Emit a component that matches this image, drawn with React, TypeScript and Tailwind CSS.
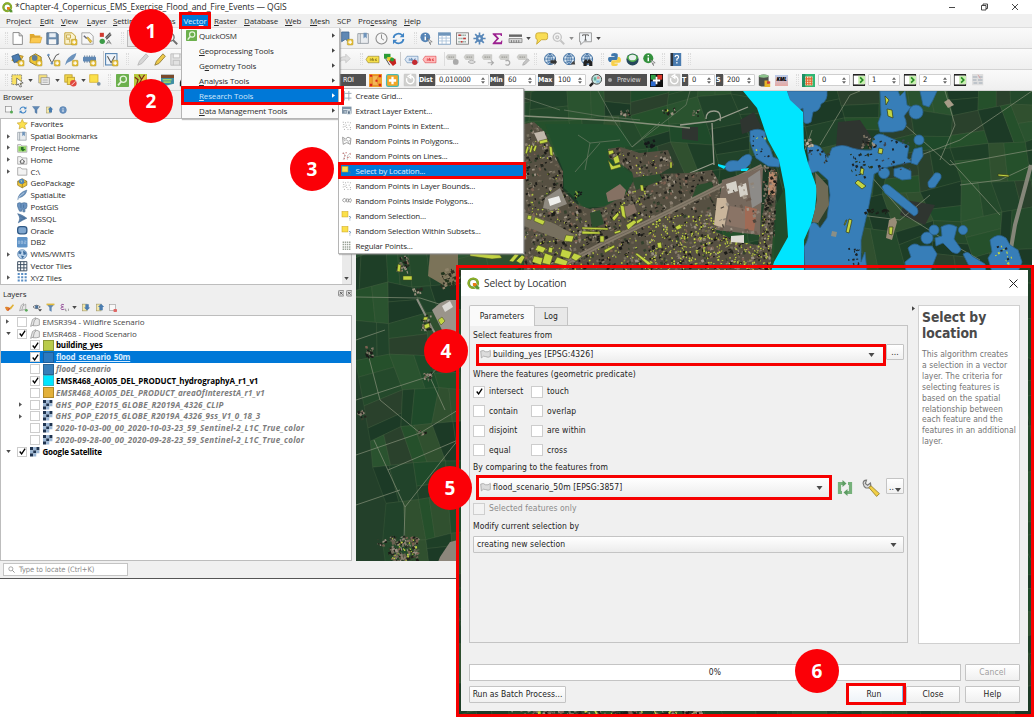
import React from "react";

/* ---------- icons (16x16 drawings) ---------- */
const plus = <g><rect x="9" y="9" width="7" height="7" rx="1" fill="#e9c23a" stroke="#a58a20" strokeWidth=".6" /><path d="M12.5 10.3v4.4M10.3 12.5h4.4" stroke="#fff" strokeWidth="1.4" /></g>;
const floppy = <g><path d="M1 1h12l2 2v12H1z" fill="#6b8cae" stroke="#47617c" /><rect x="4" y="1.5" width="8" height="5" fill="#e8eef4" /><rect x="3.5" y="9" width="9" height="6" fill="#f5f5f5" /></g>;
const mag = (c: string) => <g fill="none" stroke={c}><circle cx="6.5" cy="6.5" r="4.7" strokeWidth="1.6" /><path d="M10 10l5 5" strokeWidth="2.4" /></g>;
const label = (bg: string, c: string) => <g><path d="M0 8l2.500-4H16v8H2.500z" fill={bg} stroke={c} strokeWidth=".6" /><path d="M4.500 8.800h2M8 6v3.300h1.500V7.600H8.200M13.500 7.400h-1.800v1.900h1.800M4.700 7.300h1.800v2" stroke={c} strokeWidth=".8" fill="none" /></g>;
const globe = <g><circle cx="7.500" cy="7.500" r="6.800" fill="#dbe9f5" stroke="#3f6ea0" strokeWidth="1.200" /><path d="M.8 7.500h13.400M7.500.8v13.400M2.500 3.300q5 2.600 10 0M2.500 11.700q5-2.600 10 0M7.500.8q-6 6.700 0 13.400M7.500.8q6 6.700 0 13.400" stroke="#3f6ea0" fill="none" /></g>;
const dots = <g fill="#999">{[[2, 2], [6, 3], [10, 2], [14, 3], [3, 6], [12, 7], [7, 7], [2, 10], [8, 11], [14, 11], [4, 14], [10, 14], [14, 14], [5, 9]].map(([x, y]) => <rect key={x + "-" + y} x={x - 0.7} y={y - 0.7} width="1.500" height="1.500" />)}</g>;
const sel = <g><rect x="0" y="1" width="10" height="9" fill="#fbe04a" stroke="#d2ac25" /><path d="M12 9.500q2-1 2.500.8 0 1-1.200 1.600v1M13.300 14.500v1.300" stroke="#4a78a8" strokeWidth="1.400" fill="none" /></g>;
const refresh = (c: string) => <g fill="none" stroke={c} strokeWidth="2.200"><path d="M2 7.500A6 5.500 0 0 1 12.500 4M14 8.500A6 5.500 0 0 1 3.500 12" /><path d="M14.800 1v5.500H9.500zM1.200 15V9.500h5.300z" fill={c} stroke="none" /></g>;
const folder = <path d="M1 2.500h5l1.500 2H15V14H1z" fill="#f3f3f3" stroke="#8d8d8d" />;
const greyLabel = (extra: React.ReactNode) => <g><path d="M0 5l2-3h10v6H2z" fill="#cfcfcb" stroke="#b9b9b5" strokeWidth=".6" /><path d="M3 5h7" stroke="#9f9f9a" strokeWidth="1.500" strokeDasharray="2 .7" />{extra}</g>;
const spinner = <g fill="none" stroke="#fff" strokeWidth="1.800"><rect width="16" height="16" rx="1" fill="#d0d0ce" stroke="#bbb" strokeWidth=".5" /><path d="M4 5.500a5 5 0 1 0 5-2.500M9 1v4.500L5.500 3z" /></g>;

const ICONS: Record<string, React.ReactNode> = {
  doc: <path d="M2.500.7h7.500l4 4v10.600H2.500zM10 .7v4h4" fill="#fff" stroke="#777" />,
  open: <g><path d="M1 13V2.500h5l1.300 1.800H14V13z" fill="#e0a92e" /><path d="M1 13.500L3 6.500h13L13.800 13.500z" fill="#fbc94f" stroke="#c4912a" strokeWidth=".6" /></g>,
  floppy,
  layout: <g><path d="M1 1h9l4 4v10H1z" fill="#fbf3d0" stroke="#c1a032" strokeWidth="1.200" /><path d="M3 3.500h5v4H3zM3 9h4v4" fill="none" stroke="#c1a032" />{plus}</g>,
  wrenchDoc: <g><path d="M1 1h10l4 4v10H1z" fill="#f7f7f7" stroke="#999" /><path d="M3.500 4.500l3.500 3.500" stroke="#667" strokeWidth="1.800" /><path d="M7 7l1.500-1 5 5.500-2 2z" fill="#e8c443" stroke="#887022" strokeWidth=".6" /></g>,
  style: <g><rect x="1" y="1" width="5" height="5" fill="#d03a30" /><circle cx="4" cy="11.500" r="3.300" fill="#3c9b47" /><path d="M14 1L8 7M15 3L9 9" stroke="#555" strokeWidth="1.600" /><path d="M9 15l3-5 3 5M10 13.300h4" stroke="#777" fill="none" /></g>,
  hand: <path d="M4 15V8L2 6l1-1 3 2V2h1.500v4V1H9v5V2h1.500v5V4H12v7l-2 4z" fill="#fff" stroke="#777" />,
  mag: mag("#6f6f6f"),
  newMark: <g><path d="M2 0h9v12L6.500 9 2 12z" fill="#5f88b5" stroke="#3d6590" />{plus}</g>,
  book: <g><path d="M1 2h13v12H1z" fill="#e9ecef" stroke="#8a929b" /><path d="M4 2v12" stroke="#8a929b" /><path d="M8 1h4v7l-2-1.800L8 8z" fill="#6f94bb" /></g>,
  clock: <g fill="none" stroke="#8b8b8b"><circle cx="8" cy="8" r="6.800" fill="#f6f6f6" strokeWidth="1.300" /><path d="M8 3v5l3 2" strokeWidth="1.200" /></g>,
  refresh: refresh("#3f84c5"),
  identify: <g><circle cx="6.500" cy="6.500" r="6" fill="#5584b6" /><path d="M6.500 5.500V10M6.500 2.500v1.600" stroke="#fff" strokeWidth="1.800" /><path d="M9 8l6 4-3 .5 1 3z" fill="#fff" stroke="#555" strokeWidth=".7" /></g>,
  table: <g><rect x=".7" y="1" width="14.600" height="14" fill="#fff" stroke="#6f95bb" /><rect x=".7" y="1" width="14.600" height="3.600" fill="#6f95bb" /><path d="M5 4v11M10 4v11M1 7.500h14M1 11h14" stroke="#a6bfd8" /></g>,
  abacus: <g fill="none"><rect x=".7" y="1" width="14.600" height="14" fill="#f3f3f3" stroke="#777" /><path d="M3 4h10M3 8h10M3 12h10" stroke="#7a9a8c" strokeWidth="2" strokeDasharray="1.500 1" /><path d="M3 4h3M9 8h3M6 12h2" stroke="#c33" strokeWidth="2" /></g>,
  gear: <g stroke="#5988b9"><path d="M8 .5v15M.5 8h15M2.700 2.700l10.600 10.600M13.300 2.700L2.700 13.300" strokeWidth="2" /><circle cx="8" cy="8" r="4" fill="#5988b9" /><circle cx="8" cy="8" r="1.800" fill="#fff" /></g>,
  sigma: <path d="M2 1.500h11.500v3.500h-1.300L11.500 3.400H6L10 8l-4.500 4.600h6.300L13 10.500h1L13.500 15H2v-1.300L7.200 8 2 2.800z" fill="#9b1f8f" />,
  measure: <g><path d="M0 3h16v3H0z" fill="#666" /><path d="M0 8h16v5H0z" fill="#d4d4d4" stroke="#888" /><path d="M3 10v3M6 10v3M9 10v3M12 10v3" stroke="#666" /></g>,
  tip: <path d="M4 1h9a2.500 2.500 0 0 1 2.500 3v3A2.500 2.500 0 0 1 13 9.500H8L2 15l1-5.500Q1 9 1 7V3.500Q1 1 4 1z" fill="#f9dd55" stroke="#c3a02b" />,
  magGrey: <g fill="none" stroke="#c4c4c4"><circle cx="6.500" cy="6.500" r="5" strokeWidth="1.600" /><circle cx="6.500" cy="6.500" r="1.800" strokeWidth="1.600" /><path d="M10.500 10.500l4.500 4.500" strokeWidth="2.400" /></g>,
  text: <g fill="none" stroke="#8a8a8a"><path d="M.7 1h14.600v11H6l-4 3.500V12H.7z" fill="#f2f5f8" /><path d="M4.500 5V3.500h7V5M8 3.500v6.500M6.500 10h3" stroke="#555" strokeWidth="1.100" /></g>,
  dataSrc: <g><path d="M1 9l6-7 8 2-5 9z" fill="#e9b93b" stroke="#a8841f" /><path d="M1 4l8-3 3 7-8 4z" fill="#4a7bb0" stroke="#315b88" />{plus}</g>,
  gpkg: <g><path d="M1 5l7-4 7 4v6l-7 4-7-4z" fill="#f1c736" stroke="#806a22" /><path d="M1 5l7 4 7-4M8 9v6" fill="none" stroke="#806a22" /><circle cx="7" cy="5" r="4" fill="#4f86bc" /><path d="M5 3l3 1-1 3z" fill="#b5d3a8" /></g>,
  gpkgPlus: <g><path d="M1 5l7-4 7 4v6l-7 4-7-4z" fill="#f1c736" stroke="#806a22" /><circle cx="7" cy="6" r="3.500" fill="#5e7d97" />{plus}</g>,
  vplus: <g><path d="M1 2.500L6 12.500 11 3l4-2" fill="none" stroke="#555" strokeWidth="1.200" /><circle cx="1.800" cy="2.500" r="1.500" fill="#6a93bd" /><circle cx="6" cy="12.500" r="1.500" fill="#6a93bd" />{plus}</g>,
  feather: <g><path d="M1 15Q2 4 15 0 14 9 3 12z" fill="#6c93bd" stroke="#466c95" strokeWidth=".7" /><path d="M0 16Q3 9 11 4" stroke="#dbe7f3" fill="none" /></g>,
  featherPlus: <g><path d="M0 15Q2 4 14 0 13 9 3 12z" fill="#6c93bd" />{plus}</g>,
  chip: <g><path d="M2 3v9M5 3v9M8 3v9M11 3v9M14 3v9" stroke="#58718c" /><rect x="0" y="4.500" width="16" height="6" rx="1" fill="#5f88b5" />{plus}</g>,
  vbox: <g><rect x=".7" y=".7" width="14" height="14" fill="#eef4fa" stroke="#5c89b5" strokeWidth="1.400" /><path d="M3 4l4.500 8L12 4" fill="none" stroke="#555" strokeWidth="1.300" />{plus}</g>,
  pencilGrey: <path d="M1 15l2-5L11 1l3 3-8 9z" fill="#d6d6d6" stroke="#b5b5b5" />,
  pencil: <path d="M1 15l2-5L11 1l3 3-8 9z" fill="#edc94a" stroke="#8a7430" />,
  floppyGrey: <path d="M1 1h12l2 2v12H1zM4 1v5h8V1M4 15V9h8v6" fill="#e2e2e2" stroke="#b9b9b9" />,
  redo: <path d="M1 12V9q0-4 5-4h3V1.500L15 7.500 9 13v-3.500H6Q3 9 1 12z" fill="#dedede" stroke="#c4c4c4" />,
  abc: label("#f7e04b", "#7a6a1c"),
  abcRed: label("#fbb", "#d8232a"),
  diagram: <g><rect x="0" y="1" width="8" height="6" fill="#2b9b36" /><rect x="4" y="5" width="6" height="5" fill="#f0ce30" /><path d="M6 10l3-3h5l1 6-4 3z" fill="#c5221f" /><circle cx="10" cy="8" r="2.500" fill="#2b9b36" /><path d="M2 7l5 8" stroke="#333" /></g>,
  abcPin: <g>{label("#dbe7f5", "#3f6ea0")}<circle cx="12" cy="11.500" r="3.300" fill="#c42b31" /></g>,
  g1: greyLabel(<circle cx="12" cy="11" r="3.500" fill="#aaa" />),
  g2: greyLabel(<path d="M5 11q4-4 9 0-4 4-9 0z" fill="#ddd" stroke="#aaa" />),
  g3: greyLabel(<path d="M7 12h7M11 9l3 3-3 3" stroke="#aaa" fill="none" strokeWidth="1.500" />),
  g4: greyLabel(<path d="M8 10a3 3 0 1 1 0 4" stroke="#aaa" fill="none" strokeWidth="1.500" />),
  g5: greyLabel(<path d="M7 15l1-3 5-5 2 2-5 5z" fill="#c5c5c5" stroke="#aaa" />),
  globe: <g>{globe}<path d="M8 9h5v-2l3 4-3 4v-2H8z" fill="#333" /></g>,
  globe2: <g>{globe}<path d="M9 14l5-5 1 5z" fill="#444" /></g>,
  globeBin: <g>{globe}<path d="M3 16v-5l2-3h2l1 2 1-2h2l3 3v5h-4v-3H7v3z" fill="#222" /></g>,
  python: <g><path d="M4 2q0-2 4-2t4 2v5q0 1.500-2 1.500H6Q4 8.500 4 11H2Q0 10 0 7.500T2 5h6V4H4z" fill="#3f77ab" /><path d="M12 14q0 2-4 2t-4-2V11q0-2 2-2h4q2 0 2-4h2q2 1 2 4t-2 3H8v1h4z" fill="#f7d04a" /></g>,
  ball: <g><circle cx="8" cy="8" r="7.500" fill="#26475c" /><path d="M1 6a7.500 7 0 0 1 14 0q-3 5-7 5T1 6z" fill="#4fae4b" /><ellipse cx="8" cy="5.500" rx="4.500" ry="3.500" fill="#e8f0ee" /></g>,
  infoGreen: <g><circle cx="6.500" cy="6.500" r="6.200" fill="#33913d" /><path d="M6.500 5.500V10M6.500 2.500v1.600" stroke="#fff" strokeWidth="1.800" /><path d="M9 8l6 4-3 .5 1 3z" fill="#fff" stroke="#555" strokeWidth=".7" /></g>,
  help: <g><rect x="2" y="0" width="13" height="16" fill="#4a7cb0" /><path d="M2 0h3v16H2z" fill="#30343a" /><path d="M7.500 5q0-2 2.200-2t2 2.200q0 1.300-2 2.300v2M9.700 11v2" stroke="#fff" strokeWidth="1.500" fill="none" /></g>,
  selRect: <g><rect x="1" y="1" width="12" height="12" fill="#fae264" stroke="#777" strokeDasharray="2 1" /><path d="M7 5l8 6-4 .5 2 4-2 .5-2-4-2 2z" fill="#fff" stroke="#444" strokeWidth=".8" /></g>,
  selForm: <g><path d="M1 1h11v11H1z" fill="#f8e27a" stroke="#999" /><rect x="4" y="5" width="11" height="9" fill="#ececec" stroke="#888" /><path d="M6 8h7M6 11h7" stroke="#999" /></g>,
  desel: <g><rect x="1" y="1" width="9" height="9" fill="#f4d94d" stroke="#b99b28" /><rect x="4" y="4" width="9" height="9" fill="#f4d94d" stroke="#b99b28" /><circle cx="11.500" cy="11.500" r="4" fill="#e0463e" /><path d="M9 14l5-5" stroke="#fff" /></g>,
  selMap: <g><rect x="1" y="1" width="11" height="10" fill="#fbe04a" stroke="#d2ac25" /><circle cx="13" cy="13" r="2.500" fill="#7d93a8" /></g>,
  osm: <g><rect width="16" height="16" rx="1" fill="#6cb04d" /><circle cx="9" cy="6.500" r="3.800" stroke="#e7f5df" strokeWidth="1.600" fill="none" /><path d="M6.200 9.500L2.500 14" stroke="#e7f5df" strokeWidth="2.200" /></g>,
  osm2: <g><rect width="16" height="16" fill="#b6c83c" /><path d="M1 4l4 3-2 7M6 1l8 14M13 1L5 14" stroke="#7b2418" strokeWidth="1.500" fill="none" /><path d="M10 9l5-7" stroke="#eec33b" strokeWidth="2.500" /></g>,
  scp: <g><path d="M0 1h16v11L3 15 0 10z" fill="#3f8fa5" /><path d="M0 1h16v4H0z" fill="#7a4a2b" /><path d="M2 7h11M3 10h9" stroke="#9bd16b" strokeWidth="2" /></g>,
  bin: <path d="M1 15v-5L4 3h3l1 3 1-3h3l3 7v5h-5v-4H6v4z" fill="#222" />,
  orange: <g><rect width="16" height="16" fill="#f0a22e" /><path d="M4 2l8 0-3 6 3 6H4z" fill="#f5b658" stroke="#d98a26" /><path d="M12 1h3v3h-3zM8 7h2.500v2.500H8zM12 12h3v3h-3zM1 1h3v2.500H1zM1 12h3v3H1z" fill="#d9261c" /></g>,
  orangePlus: <g><rect x=".7" y=".7" width="14.600" height="14.600" rx="2" fill="#f5a623" stroke="#49b8b4" strokeWidth="1.500" /><path d="M8 3.500v9M3.500 8h9" stroke="#fff" strokeWidth="2.800" /></g>,
  spin: spinner,
  magColor: <g><path d="M5 11l-4 4" stroke="#222" strokeWidth="3" /><circle cx="9.500" cy="6.500" r="6" fill="#bfe3dd" stroke="#444" strokeWidth="1.200" /><path d="M6 4h3v4H6z" fill="#5fae9a" /><path d="M10 3h3v3h-3z" fill="#e58d8d" /><path d="M9 8h4v2.500H9z" fill="#7db8d8" /></g>,
  rgb: <g><rect width="16" height="16" fill="#111" /><path d="M1 1h6v6H1z" fill="#31a047" /><path d="M9 1h6v6H9z" fill="#d8362a" /><path d="M1 9h6v6H1z" fill="#2d6bd0" /><path d="M9 9h6v6H9z" fill="#111" /><path d="M8 3.500v9M3.500 8h9" stroke="#fff" strokeWidth="2.200" /></g>,
  barrel: <g><path d="M1 2q6-3 12 0v12q-6 3-12 0z" fill="#4c4f4b" /><ellipse cx="7" cy="2.500" rx="6" ry="2" fill="#8cc28c" /><path d="M8 8h4v4h3v4H8z" fill="#e7b528" /><path d="M11 9h4v3h-4z" fill="#cf3f32" /></g>,
  gridColor: <g><rect width="16" height="16" fill="#2fb673" /><path d="M0 0h4v16H0z" fill="#1d8f63" /><rect x="4" y="3" width="9" height="11" fill="#f3e8c8" /><path d="M5.500 3v11M8.500 3v11M11.500 3v11M4 6h9M4 9h9M4 12h9" stroke="#e5622e" strokeWidth="1.300" /></g>,
  next: <g><path d="M.5 1h15v14H.5z" fill="#fff" stroke="#222" strokeWidth="1" /><path d="M0 1h16M0 15h16" stroke="#222" strokeWidth="2" /><rect x="7" y="2.500" width="9" height="11" fill="#c9f0b0" /><path d="M9.500 4.500L13 8l-3.500 3.500" fill="none" stroke="#238a22" strokeWidth="2.200" /></g>,
  cards: <g><rect width="15" height="15" fill="#dedede" /><path d="M1 4h6M9 4h5M1 8h5M8 8h6M2 12h5M9 12h5" stroke="#b4bcc4" strokeWidth="2.200" /><path d="M8 1l3 5" stroke="#d99" /></g>,
  /* panels */
  addLayer: <g><rect x="1" y="1" width="12" height="11" fill="#f8f8f8" stroke="#888" strokeWidth="1.300" /><circle cx="13" cy="12" r="3" fill="#55a854" /></g>,
  funnel: <path d="M1 1h14L10 7.500V15l-4-2V7.500z" fill="#5f88b5" stroke="#3d6590" strokeWidth=".7" />,
  funnelY: <g><path d="M1 2h14L10 8v7.500l-4-2V8z" fill="#5f88b5" /><path d="M1 1h14v3H1z" fill="#e0b93e" /></g>,
  up: <g><rect x="1" y="2" width="8" height="12" fill="#f5e7a8" stroke="#99905e" /><path d="M6 13V7H3.500L9 1.500 14.500 7H12v6z" fill="#4a7cb0" /></g>,
  down: <g><rect x="1" y="2" width="8" height="12" fill="#f5e7a8" stroke="#99905e" /><path d="M6 2v6H3.500L9 13.500 14.500 8H12V2z" fill="#4a7cb0" /></g>,
  info: <g><circle cx="8" cy="8" r="6.800" fill="#6b93c0" stroke="#4876a8" /><path d="M8 7v5M8 3.800v1.700" stroke="#fff" strokeWidth="1.800" /></g>,
  star: <path d="M8 .5l2.300 5 5.400.6-4 3.700 1.100 5.500L8 12.600l-4.800 2.700 1.100-5.500-4-3.700 5.400-.6z" fill="#fbe04f" stroke="#c8a42c" />,
  projHome: <g>{folder}<path d="M2 5h12v8H2z" fill="#8ed45e" /><path d="M6 6h4v3h3l-4 4-3-3z" fill="#2b6e2b" /></g>,
  home: <g>{folder}<path d="M4 10l4-3.500 4 3.500M5.500 9v3.500h5V9" fill="none" stroke="#444" strokeWidth="1.200" /></g>,
  folder,
  elephant: <path d="M1 2q3-2 6 0 4-2 8 0 1 5-1 8h-2v5H9v-4H7v3H4L2 10Q0 6 1 2zM6 3v6M10 4v5" fill="#6b93c0" stroke="#3f6894" />,
  mssql: <path d="M1 1q6 1 14 7-7 3-13 7 2-4 2-7T1 1zM5 5l7 3-7 3" fill="#5b82ad" stroke="#38608c" strokeWidth=".8" />,
  oracle: <rect x="1" y="2.500" width="14" height="11" rx="4" fill="#7fa6cf" stroke="#2f5986" strokeWidth="2" />,
  db2: <g><rect width="16" height="16" rx="2" fill="#5f93c7" /><path d="M2 6v4h2V6zM6.500 6v4h2V6zM11 6h2.500v2H11v2h3" fill="none" stroke="#a9c7e4" /></g>,
  wms: <g><circle cx="8" cy="8" r="7" fill="#b9d2ea" stroke="#3f6ea0" /><path d="M3 3l4 1-1 4-4-1zM9 3l4 1 1 4-4 1zM6 10l5 1-3 4z" fill="#3f6ea0" /></g>,
  vtiles: <path d="M1 1h14v14H1zM1 5.500h14M1 10.500h14M5.500 1v14M10.500 1v14" fill="none" stroke="#3e5063" strokeWidth="1.500" />,
  xyz: <path d="M1 3h14M1 8h14M1 13h14" stroke="#5a8ec4" strokeWidth="3.200" strokeDasharray="3.200 2.100" />,
  brush: <g><path d="M8 9l6-7 2 2-6 8z" fill="#e0b238" /><path d="M0 7q5-1 9 2-1 5-4 5T0 7z" fill="#e0842c" /><path d="M5 13l2-1 1-3" stroke="#c33" strokeWidth="1.500" fill="none" /></g>,
  group: <g fill="#e7e7e7" stroke="#8a8a8a" strokeWidth="1.100"><path d="M1 15l3-11 5-3v10z" /><path d="M5 14l2-9 4-3 4 2v9l-5 1z" /></g>,
  groupPlus: <g fill="#e7e7e7" stroke="#8a8a8a"><path d="M1 14l3-10 4-3v10z" /><path d="M5 13l2-8 5-3v9z" /><circle cx="13" cy="13" r="2.500" fill="#5aa95a" stroke="none" /></g>,
  eye: <g><path d="M0 7q6-6 13 0-6 6-13 0z" fill="#fff" stroke="#555" strokeWidth="1.300" /><circle cx="6.500" cy="7" r="3" fill="#4c7198" /><path d="M9 11h7l-3.500 4z" fill="#444" /></g>,
  eps: <g fill="none" stroke="#8b3f8f" strokeWidth="1.500"><path d="M7 3Q2 1 2 4t4 3Q1 7 1.500 10T8 11" /><path d="M10 10v4h2M15 10v4" stroke="#666" strokeWidth="1" /></g>,
  remove: <g><rect x="1" y="1" width="12" height="12" fill="#f8f8f8" stroke="#888" /><rect x="9" y="10" width="7" height="6" rx="1.500" fill="#df6866" /></g>,
  raster: <g><path d="M0 0h5v5H0zM10 0h5v5h-5zM5 5h5v5H5zM0 10h5v5H0z" fill="#1f3450" /><path d="M5 0h5v5H5zM10 5h5v5h-5zM0 5h5v5H0zM5 10h5v5H5z" fill="#9bb6d4" /></g>,
  /* submenu */
  grid: <path d="M4 0v16M11.500 0v16M0 4h16M0 12h16" stroke="#9aa9b8" strokeWidth="1.600" />,
  extent: <g><rect y="1" width="16" height="12" fill="#7f93a5" /><path d="M2 6h12M4 10h3M9 8h5v6H9z" stroke="#e4ebf1" strokeWidth="1.600" fill="#5d7388" /></g>,
  dots,
  poly: <g fill="none" stroke="#777" strokeWidth="1.200"><path d="M1 2l5 3 4-3 5 2-1 10-6-3-6 3z" /><path d="M3 5l2 4 3-3 3 5 2-5" strokeDasharray="1.500 1" /></g>,
  lines: <g><path d="M2 15l3-8M5 7L2 2M9 15V8l5-5M11 8l4 4" stroke="#aaa" fill="none" /><path d="M1 4h2M6 3h2M4 8h2M13 5h2M9 11h2M3 13h2" stroke="#b55" strokeWidth="1.600" /></g>,
  sel,
  inside: <g fill="none" stroke="#888" strokeWidth="1.200"><path d="M1 8q0-4 4-4 3 2 1 5t-5-1zM7 5h4v5H8zM11 8l3-4 2 3-2 4z" /></g>,
  regular: <path d="M1 2h14M1 6h14M1 10h14M1 14h14" stroke="#9aa397" strokeWidth="2.400" strokeDasharray="2.400 1.200" />,
  layer: <path d="M1 3q4-2 7 1 4 1 7-2v9q-3 2-7 0-3-2-6 2z" fill="#dcdcdc" stroke="#999" />,
  loop: <g fill="none" stroke="#76b17a" strokeWidth="3.200"><path d="M7 3.500H2.500v9H5M9 12.500h4.500v-9H11" /><path d="M5.500 0v7l4-3.500zM10.500 9v7l-4-3.500z" fill="#5d9c63" stroke="none" /></g>,
  wrench: <g><path d="M1 4q0-3 3-3L3 4l2 1.500 2.500-2Q8.500 7 6 8L3.500 8Q1.500 7 1 4z" fill="#ddd" stroke="#777" /><path d="M6 7.500L8 6l7.500 7-2.500 2.500z" fill="#f2cf45" stroke="#9a8530" strokeWidth=".8" /></g>,
  search: <g fill="none" stroke="#777"><circle cx="6.500" cy="6.500" r="4.700" strokeWidth="1.400" /><path d="M10 10l5 5" strokeWidth="1.800" /></g>,
};

function Ic({ n, c = "size-[13px]" }: { n: string; c?: string }) {
  return <svg viewBox="0 0 16 16" className={"shrink-0 overflow-visible " + c}>{ICONS[n]}</svg>;
}
function QLogo({ c }: { c: string }) {
  return (
    <svg viewBox="0 0 24 24" className={"shrink-0 " + c}>
      <circle cx="11.500" cy="11.500" r="8.300" fill="none" stroke="#6fa03a" strokeWidth="5" />
      <circle cx="11.500" cy="11.500" r="9" fill="none" stroke="#93b023" strokeWidth="2.500" />
      <path d="M11 11h5l7 8v4h-5l-7-7z" fill="#589632" stroke="#fff" strokeWidth=".8" />
      <path d="M11 11h4.500l3 3-4 4-3.500-3z" fill="#ee7913" />
    </svg>
  );
}
const Caret = ({ c = "h-[3px] w-[5px]" }: { c?: string }) => <svg viewBox="0 0 6 4" className={"shrink-0 " + c}><path d="M0 0h6L3 4z" fill="#4a4a4a" /></svg>;
const Right = ({ c = "fill-[#555]" }: { c?: string }) => <svg viewBox="0 0 4 6" className={"h-[5px] w-[3px] shrink-0 " + c}><path d="M0 0l4 3-4 3z" /></svg>;
const Grip = ({ c = "" }: { c?: string }) => <div className={"h-[12px] w-[3px] shrink-0 border-x border-dotted border-[#dcdcdc] " + c} />;
const Group = ({ c, items }: { c: string; items: string[] }) => (
  <div className={"flex shrink-0 items-center justify-between " + c}>{items.map((n, i) => <Ic key={i} n={n} />)}</div>
);

/* ---------- map ---------- */
function rng(seed: number) {
  let s = seed;
  return () => ((s = (s * 16807) % 2147483647) - 1) / 2147483646;
}
const GREENS = ["#21432a", "#25502b", "#1e3f27", "#2a532f", "#24492b", "#1f4a2a", "#30502f", "#2a412c", "#1c3a26"];
function buildFields() {
  const r = rng(77);
  const pts: number[][][] = [];
  for (let j = 0; j < 21; j++) {
    pts.push([]);
    for (let i = 0; i < 24; i++) pts[j].push([320 + i * 34 + (r() - 0.5) * 14 + j * 5, 75 + j * 36 + (r() - 0.5) * 14 - i * 4]);
  }
  const out: { d: string; f: string }[] = [];
  for (let j = 0; j < 20; j++)
    for (let i = 0; i < 23; i++) {
      const [a, b, c, d] = [pts[j][i], pts[j][i + 1], pts[j + 1][i + 1], pts[j + 1][i]];
      const k = 0.3 + r() * 0.4;
      const mix = (p: number[], q: number[]) => [p[0] + (q[0] - p[0]) * k, p[1] + (q[1] - p[1]) * k];
      const halves = r() > 0.45 ? [[a, mix(a, b), mix(d, c), d], [mix(a, b), b, c, mix(d, c)]] : [[a, b, mix(b, c), mix(a, d)], [mix(a, d), mix(b, c), c, d]];
      halves.forEach((q) => out.push({ d: "M" + q.map((p) => p[0].toFixed(1) + " " + p[1].toFixed(1)).join("L") + "Z", f: GREENS[Math.floor(r() * GREENS.length)] }));
    }
  return out;
}
const FIELDS = buildFields();
const TOWN = "M524 124L534 122 545 132 556 158 563 172 563 190 578 205 590 209 604 207 625 195 634 180 632 172 622 165 609 158 608 149 620 147 640 153 668 150 674 165 660 174 688 173 712 170 718 180 722 200 716 232 740 242 758 245 765 200 778 172 776 196 774 222 770 275 524 275Z";
function scatter(seed: number, n: number, x: number, y: number, w: number, h: number, cols: string[], max: number) {
  const r = rng(seed);
  return Array.from({ length: n }, (_, i) => {
    const px = x + r() * w, py = y + r() * h, a = 0.8 + r() * max, b = 0.8 + r() * max;
    return <rect key={seed + "-" + i} x={px} y={py} width={a} height={b} fill={cols[Math.floor(r() * cols.length)]} transform={`rotate(${(-30 + r() * 20).toFixed(0)} ${px.toFixed(1)} ${py.toFixed(1)})`} />;
  });
}
const CITY = ["#1c1c18", "#26261f", "#8a7f70", "#6b6252", "#9c9283", "#34402d", "#7d6152", "#77705f", "#1a1a17"];
const Y = "#c3d543";
function SatMap({ box, c }: { box: string; c: string }) {
  const clip = "town" + box.slice(0, 3);
  return (
    <svg viewBox={box} preserveAspectRatio="none" className={c}>
      <defs>
        <clipPath id={clip}><path d={TOWN} /></clipPath>
      </defs>
      <rect x="340" y="80" width="700" height="650" fill="#23402a" />
      {FIELDS.map((f, i) => <path key={i} d={f.d} fill={f.f} stroke="#4d6a49" strokeWidth=".3" />)}
      <path d="M545 124L600 124 620 126 632 146 608 149 609 158 634 175 630 192 604 206 585 208 564 188 563 170Z" fill="#21502d" />
      <path d="M682 127L698 127 698 141 682 139ZM740 120L754 112 762 128 742 134ZM838 122L860 120 872 138 862 150 836 146ZM905 200L935 205 925 225 900 215Z" fill="#2f3530" />
      <g fill="none" stroke="#86907a" strokeWidth=".7">
        <path d="M524 116L620 121 690 128" strokeWidth="1.600" />
        <path d="M598 91L615 122 632 147M632 147L686 105 690 91M632 147L660 122M564 110L600 116 640 120M524 98L560 110M578 135L590 143 585 170M590 143L620 140M600 143L575 172" stroke="#6d7d66" />
        <path d="M680 125L714 121 748 107M712 123L714 165M690 173L714 163M706 119q0-8 8-8t6 10" stroke="#999c8d" strokeWidth="1.300" />
        <path d="M820 145L850 95 860 91M805 150L812 130M870 175L905 215 945 240 980 260M895 165L960 140 1032 91M960 185L1000 180 1032 165M950 160L1000 215M860 215L900 220 930 195M905 125L950 165 1032 150M945 91L955 125 940 160" />
        <path d="M1031 165L1015 225 1008 266" stroke="#858679" strokeWidth="4" />
        <path d="M356 297L420 298 458 310M356 400L430 376 458 345M374 440L405 507M356 455L420 433 458 410M405 507L458 440M405 507L404 540M388 470L458 440M356 505L400 490M367 350L380 400 420 433M356 340L385 330M430 377L445 410" />
        <path d="M417 299L432 328 446 352" stroke="#8d8f83" strokeWidth="2" />
      </g>
      <path d={TOWN} fill="#565042" />
      <g clipPath={`url(#${clip})`}>
        {scatter(11, 2500, 522, 120, 258, 155, CITY, 2.400)}
        {scatter(12, 190, 525, 190, 120, 80, [Y, "#b3c43a"], 0.900)}
        {scatter(13, 360, 645, 215, 125, 55, [Y, "#b3c43a"], 1.100)}
        {scatter(14, 60, 524, 125, 150, 60, [Y], 0.700)}
      </g>
      <path d="M697 185L712 182 714 190 690 203ZM590 213L600 210 604 224 592 228ZM632 178L660 174 662 180 636 190Z" fill="#2c4d2e" />
      <path d="M524 212L555 224 575 235 566 242 524 226Z" fill="#77705f" />
      <path d="M762 166L712 190 660 216 610 240 560 266" stroke="#857b6b" strokeWidth="4.500" fill="none" />
      <path d="M762 166L712 190 660 216 610 240 560 266" stroke="#6a6254" strokeWidth=".8" fill="none" />
      <path d="M545 198L560 188 567 204 552 210 543 208Z" fill="#8f8a80" />
      <path d="M548 199L559 196 561 202 550 206Z" fill="#efefec" />
      <path d="M534 133l10-2 3 8-9 3z" fill="#c2b8ab" />
      <path d="M606 193L620 184 626 190 624 198 608 202ZM622 207l12-3 3 8-10 5z" fill="#857163" />
      <path d="M722 180L763 168 760 235 716 230Z" fill="#77695d" />
      <path d="M717 198l9 0 2 10-4 20-10-3z" fill="#c9b59b" />
      <path d="M726 184l10-3 2 10-10 3zM738 186l8-3 2 12-8 2z" fill="#d5d1c8" />
      <path d="M748 178l12-8 2 32-10 6z" fill="#8d8b88" />
      <path d="M730 206l22 4-2 20-24-5z" fill="#8a7466" /><path d="M745 206l12 3-3 22-9-2z" fill="#a06a55" />
      <path d="M731 236l13-1v8l-13-1z" fill="#dedbd4" />
      {scatter(22, 40, 718, 182, 38, 50, ["#8f8376", "#6a5a4e", "#a59a8b", "#4d453c"], 3)}
      <path d="M769 172L777 172 775 195 768 195Z" fill="#b98a6c" />
      {scatter(21, 110, 762, 165, 13, 75, CITY, 2.300)}
      <path d="M776 205L786 185 788 237 774 262Z" fill="#214b2a" />
      <g fill={Y} stroke="#3e451c" strokeWidth=".5">
        <path d="M539 141l8-2 1 3-8 2zM525 153l2-7 2 1-2 7zM529 152l2-7 2 1-2 7zM533 150l2-5 2 1-2 6zM549 146l3 1 1 9-3-1zM608 151l5-1 1 3-5 2zM613 158l5-3 2 7-5 2zM608 160l5 6 7-2 1 3-10 3zM670 162l2 0 0 6-2 0zM640 185l3 0 1 6-3 0zM535 217l10 4-2 4-9-4zM528 215l4 1-1 4-4-1zM582 227l26 1 0 2-26-1zM582 231l18 1 0 2-18 0zM620 205l4 1 2 13-4-3zM612 218l6-6 1 3-5 6zM626 225l8-5 3 2-9 8zM636 221l6-3 1 2-6 4zM614 232l6-2 1 2-6 2zM604 250l10-5 1 2-10 6z" />
        <path d="M538 245l8 3-3 5-8-3zM549 247l4 1-1 5-4-1zM534 256l9 2-2 7-9-3zM545 253l8 3-3 9-8-2zM562 249l10 3-3 7-9-3zM574 253l8 3-6 5-5-3zM557 257l11 4-2 5-12-3zM566 235l8 1-2 6-8-1zM600 236l4 0 0 6-4 0zM509 261l6-7 4 1-6 7zM516 261l6-6 3 2-4 7zM470 253l30 2 2 3-10 1-22-3zM637 253l15 11-4 1-13-11zM657 243l4-1 1 6-4 0zM675 227l5-3 2 4-5 2z" />
      </g>
      {/* water and flood extent */}
      <g fill="#377eb8" stroke="#2b6391" strokeWidth=".8" strokeLinejoin="round">
        <path d="M787 91L827 91Q828 101 821 104 820 111 813 112L811 122Q806 125 804 122L803 108Q797 112 795 107 787 106 789 98Z" />
        <path d="M750 131Q759 127 765 132L766 142 770 148 773 157 780 160 779 167 768 166 756 158 752 148 750 141Z" />
        <path d="M742 157Q750 151 752 158L750 164 744 170 734 171Q725 173 725 166 727 159 738 161Z" />
        <path d="M807 148Q812 142 820 147L828 158 832 148Q842 143 852 148 860 151 872 150L873 138Q878 131 886 136L900 142 909 146 907 158 912 162 901 164 888 167 874 174Q872 190 869 205L861 240 861 262 865 252 867 272H805L804 247Q810 238 809 226 814 218 820 228L827 218 830 195 828 180 818 171 811 173Q806 165 809 160Z" />
        <path d="M880 91L898 91 900 96 905 91 907 105 911 107 904 116Q909 125 903 130L893 132 880 132 878 123 881 115Z" />
        <path d="M920 91L937 91 933 100 929 107 923 105Z" />
        <circle cx="916" cy="112" r="7" /><circle cx="919" cy="140" r="5" /><path d="M914 149L922 147 923 156 917 165 911 163 912 155Z" />
        <circle cx="884" cy="173" r="5.500" /><path d="M894 169L902 167 911 171 911 179 902 180 894 176Z" />
        <path d="M882 187Q885 182 890 186L905 198 917 208Q920 214 914 216L900 205 885 193Z" />
        <path d="M928 182L935 173Q942 172 941 178L935 187Q928 190 928 184Z" />
        <circle cx="934" cy="230" r="5" /><circle cx="927" cy="238" r="6" /><circle cx="963" cy="230" r="4.500" />
        <path d="M941 227Q949 222 957 227L954 239 961 249Q959 256 952 252L943 243 936 246 935 238 942 236Z" />
        <path d="M908 248Q914 241 920 246L932 246 937 254 930 272H906L905 262 911 257Z" /><path d="M963 254Q968 250 972 256L985 264 986 272H972Z" />
        <path d="M990 240Q998 232 1006 238L1010 245 1018 250 1022 262 1018 272H992L988 258 992 252Z" />
      </g>
      <path d="M743 91L787 91 790 100 803 112 804 148 808 163 817 188 815 210 811 224 804 240 804 275 770 275 774 262 788 237 785 190 779 160 768 140 757 108Z" fill="#00e5ff" />
      <path d="M718 164l8 2-2 3-6-3zM741 169l8-1-2 3-6 0z" fill="#00e5ff" />
      <path d="M815 172L828 186 829 205 818 223 812 222 817 200Z" fill="#6f6b56" />
      <path d="M832 231l5 1-1 5-5-1z" fill="#8b8f86" />
      <path d="M889 220L895 217 897 222 892 240 886 238Z" fill="#998c77" />
      <path d="M944 102l5-3 5 6-6 3z" fill="#a89c88" />
      {scatter(31, 26, 850, 152, 22, 28, ["#1c2326", "#273317"], 1.900)}
      {scatter(32, 26, 875, 138, 34, 32, ["#1c2326", "#3c4450"], 1.900)}
      {scatter(33, 14, 808, 148, 20, 14, ["#1c2326", "#3c3a31"], 1.900)}
      {scatter(34, 12, 752, 134, 16, 24, ["#1c2326", Y], 1.400)}
      {scatter(35, 14, 995, 242, 18, 22, ["#1c2326", Y], 1.700)}
      {scatter(36, 14, 848, 246, 10, 18, ["#1c2326"], 1.900)}
      {scatter(37, 20, 864, 209, 28, 4, ["#1c1f1a"], 1.800)}
      {scatter(38, 18, 861, 135, 12, 12, CITY, 2.400)}
      {scatter(43, 12, 804, 138, 8, 9, ["#9a8f7c", "#c4b8a4", "#5a5346"], 3)}
      {scatter(39, 14, 620, 110, 9, 7, CITY, 2)}
      {scatter(40, 14, 662, 108, 13, 8, ["#9a927f", "#22221c", Y], 2)}
      {scatter(44, 10, 692, 109, 6, 7, CITY, 2)}
      {scatter(41, 14, 644, 140, 9, 7, ["#16181a"], 2)}
      {scatter(42, 12, 574, 191, 6, 6, ["#16181a", Y], 1.800)}
      <g fill={Y} stroke="#333c14" strokeWidth=".7">
        <path d="M885 96l4 4-3 5zM887 109l5 1 1 8-5-2zM879 148l4 1-1 5-4-1zM849 219l3 1-3 13-3-1zM846 220l1 0-2 5-1 0zM855 183l3-3 8 6-4 3zM861 168l3 1-1 6-3-2zM998 174l11 1 0 2-11-1zM889 227l4 0-1 8-3-1z" />
      </g>
      {/* south-western countryside */}
      <path d="M430 253L458 250 458 285 445 286 428 276Z" fill="#7b7359" />
      <path d="M432 310L440 303 447 300 458 300 458 335 442 330Z" fill="#9a948a" />
      <path d="M442 306l8-5 3 6-8 5z" fill="#dcdad6" />
      {scatter(51, 36, 396, 256, 12, 16, CITY, 2.300)}
      {scatter(52, 50, 440, 268, 18, 20, ["#25361f", "#8d8269", "#2d2f22"], 3)}
      {scatter(53, 30, 421, 314, 9, 16, CITY, 2)}
      {scatter(54, 24, 365, 345, 7, 12, CITY, 2)}
      {scatter(55, 20, 423, 372, 8, 7, CITY, 2)}
      {scatter(56, 16, 357, 410, 7, 9, CITY, 2)}
      {scatter(57, 12, 418, 430, 7, 5, CITY, 1.600)}
      {scatter(58, 170, 388, 536, 29, 26, CITY, 2.600)}
      {scatter(59, 14, 377, 539, 8, 6, CITY, 2)}
      {scatter(60, 22, 392, 538, 24, 22, [Y], 1)}
      {scatter(62, 12, 412, 288, 9, 6, ["#9a927f", "#2a2a22"], 2.400)}
      <path d="M440 557L450 542 458 540 458 562 438 562Z" fill="#8d867b" />
      <path d="M403 276l9 0 0 4-9 0zM398 264l3 1-1 7-3-1zM438 320l4-3 3 4-4 4zM424 325l5-2 1 4-5 2zM424 317l4 0-1 3-4 0z" fill={Y} stroke="#3e451c" strokeWidth=".5" />
      {scatter(61, 220, 510, 708, 190, 10, [...CITY, Y], 4)}
    </svg>
  );
}

/* ---------- toolbars ---------- */
const MENUS: [string, string, number][] = [
  ["Project", "w-[34px]", 3], ["Edit", "w-[21px]", 0], ["View", "w-[26px]", 0], ["Layer", "w-[26px]", 0], ["Settings", "w-[34px]", 0], ["Options", "w-[32px]", -1],
];
const MENUS2: [string, string, number][] = [
  ["Raster", "w-[30px]", 0], ["Database", "w-[41px]", 0], ["Web", "w-[25px]", 0], ["Mesh", "w-[27px]", 0], ["SCP", "w-[21px]", -1], ["Processing", "w-[46px]", 3], ["Help", "w-[20px]", 0],
];
const U = ({ t, i }: { t: string; i: number }) => i < 0 ? <>{t}</> : <>{t.slice(0, i)}<span className="underline decoration-[0.5px] underline-offset-1">{t[i]}</span>{t.slice(i + 1)}</>;

const Tag = ({ t, c }: { t: string; c: string }) => <div className={"flex h-[12px] shrink-0 items-center overflow-hidden bg-[#505050] font-['DejaVu_Sans_Condensed'] text-[7px] font-bold text-white " + c}>{t}</div>;
const Spin = ({ t, c }: { t: string; c: string }) => (
  <div className={"flex h-[12px] shrink-0 items-center justify-between rounded-[1px] border border-[#cfcfcf] bg-white px-[3px] font-['DejaVu_Sans_Condensed'] text-[7.500px] tracking-[-0.05px] text-[#222] " + c}>
    <span>{t}</span>
    <svg viewBox="0 0 5 8" className="h-[7px] w-[4px]"><path d="M0 3L2.500 0 5 3zM0 5h5L2.500 8z" fill="#666" /></svg>
  </div>
);
const BAR = "flex h-[21px] shrink-0 items-center border-b border-[#d4d4d4] bg-linear-to-b from-[#fafafa] to-[#efefef]";

function Toolbars() {
  return (
    <>
      <div className={BAR}>
        <Grip c="ml-[5px]" />
        <Group c="ml-[3px] w-[101px]" items={["doc", "open", "floppy", "layout", "wrenchDoc", "style"]} />
        <Grip c="ml-[9px]" />
        <div className="ml-[3px] flex h-[17px] w-[20px] items-center justify-center border border-[#bbb] bg-[#e8e8e8]"><Ic n="hand" /></div>
        <Ic n="mag" c="ml-[18px] size-[13px]" />
        <Group c="ml-[162px] w-[65px]" items={["newMark", "book", "clock", "refresh"]} />
        <Grip c="ml-[9px]" />
        <Group c="ml-[3px] w-[102px]" items={["identify", "table", "abacus", "gear", "sigma", "measure"]} />
        <Caret c="ml-[4px] h-[3px] w-[5px]" />
        <Group c="ml-[4px] w-[30px]" items={["tip", "magGrey"]} />
        <Caret c="ml-[4px] h-[3px] w-[5px] opacity-60" />
        <Ic n="text" c="ml-[5px] size-[13px]" />
        <Caret c="ml-[4px] h-[3px] w-[5px]" />
      </div>
      <div className={BAR}>
        <Grip c="ml-[5px]" />
        <Group c="ml-[3px] w-[85px]" items={["dataSrc", "gpkgPlus", "vplus", "featherPlus", "chip"]} />
        <div className="ml-[7px] h-[16px] w-px bg-[#ccc]" />
        <Ic n="vbox" c="ml-px size-[13px]" />
        <Grip c="ml-[8px]" />
        <Group c="ml-[8px] w-[46px]" items={["pencilGrey", "pencil", "floppyGrey"]} />
        <Ic n="redo" c="ml-[156px] size-[12px]" />
        <Grip c="ml-[9px]" />
        <Group c="ml-[3px] w-[31px]" items={["abc", "diagram"]} />
        <div className="ml-[3px] h-[14px] w-px bg-[#ccc]" />
        <Group c="ml-[4px] w-[31px]" items={["abcPin", "abcRed"]} />
        <div className="ml-[8px] h-[14px] w-px bg-[#ddd]" />
        <Group c="ml-px w-[84px]" items={["g1", "g2", "g3", "g4", "g5"]} />
        <Grip c="ml-[4px]" />
        <Group c="ml-[7px] w-[50px]" items={["globe", "globe2", "globeBin"]} />
        <Grip c="ml-[7px]" />
        <Group c="ml-[4px] w-[48px]" items={["python", "ball", "infoGreen"]} />
        <Grip c="ml-[6px]" />
        <Ic n="help" c="ml-[4px] size-[13px]" />
        <Grip c="ml-[6px]" />
      </div>
      <div className={BAR}>
        <Grip c="ml-[5px]" />
        <Ic n="selRect" c="ml-[3px] size-[13px]" /><Caret c="ml-[4px] h-[3px] w-[5px]" />
        <Ic n="selForm" c="ml-[5px] size-[12px]" /><Caret c="ml-[5px] h-[3px] w-[5px]" />
        <Ic n="desel" c="ml-[4px] size-[13px]" /><Caret c="ml-[4px] h-[3px] w-[5px]" />
        <Ic n="selMap" c="ml-[3px] size-[12px]" />
        <Grip c="ml-[7px]" />
        <Group c="ml-[5px] w-[31px]" items={["osm", "osm2"]} />
        <Group c="ml-[14px] w-[31px]" items={["scp", "bin"]} />
        <div className="ml-[147px] flex h-[12px] w-[27px] shrink-0 items-center bg-[#505050] pl-[4px] font-['DejaVu_Sans_Condensed'] text-[7px] text-white">ROI</div>
        <Ic n="orange" c="ml-[3px] size-[13px]" />
        <Ic n="orangePlus" c="ml-[4px] size-[13px]" />
        <Ic n="spin" c="ml-[5px] size-[12px]" />
        <Tag t="Dist" c="ml-[3px] w-[16px]" /><Spin t="0,010000" c="w-[54px]" />
        <Tag t="Min" c="ml-px w-[14px]" /><Spin t="60" c="w-[32px]" />
        <Tag t="Max" c="ml-[2px] w-[16px]" /><Spin t="100" c="w-[32px]" />
        <Ic n="magColor" c="ml-[3px] size-[13px]" />
        <div className="ml-[3px] flex h-[12px] w-[42px] shrink-0 items-center gap-[5px] bg-[#505050] pl-[3px] font-['DejaVu_Sans_Condensed'] text-[7px] text-[#ddd]"><span className="size-[4px] rounded-full bg-[#aaa]" />Preview</div>
        <Ic n="rgb" c="ml-[3px] size-[13px]" />
        <Ic n="spin" c="ml-[5px] size-[12px]" />
        <Tag t="T" c="ml-[2px] w-[6px]" /><Spin t="0" c="w-[27px]" />
        <Tag t="S" c="ml-px w-[7px]" /><Spin t="200" c="w-[32px]" />
        <Ic n="barrel" c="ml-[3px] size-[13px]" />
        <div className="ml-[4px] flex h-[11px] w-[13px] items-center justify-center bg-linear-to-b from-[#b9cdec] to-[#e7a9a2] text-[5px] font-black italic text-black">KML</div>
        <Grip c="ml-[8px]" />
        <Ic n="gridColor" c="ml-[3px] size-[13px]" />
        <Spin t="0" c="ml-[3px] w-[32px]" /><Ic n="next" c="ml-[3px] size-[12px]" />
        <Spin t="1" c="ml-[3px] w-[32px]" /><Ic n="next" c="ml-[4px] size-[12px]" />
        <Spin t="2" c="ml-[3px] w-[32px]" /><Ic n="next" c="ml-[3px] size-[12px]" />
        <Ic n="cards" c="ml-[6px] size-[12px]" />
      </div>
    </>
  );
}

/* ---------- left docks ---------- */
const BROWSER: [string, string, boolean][] = [
  ["star", "Favorites", false], ["book", "Spatial Bookmarks", true], ["projHome", "Project Home", true], ["home", "Home", true], ["folder", "C:\\", true],
  ["gpkg", "GeoPackage", false], ["feather", "SpatiaLite", false], ["elephant", "PostGIS", false], ["mssql", "MSSQL", false], ["oracle", "Oracle", false],
  ["db2", "DB2", false], ["wms", "WMS/WMTS", true], ["vtiles", "Vector Tiles", false], ["xyz", "XYZ Tiles", true],
];
const Check = ({ on, c = "size-[10px] border-[#cdcdcd] bg-white" }: { on?: boolean; c?: string }) => (
  <div className={"flex shrink-0 items-center justify-center border " + c}>
    {on && <svg viewBox="0 0 8 8" className="size-[7px]"><path d="M.8 4L3 6.800 7 .8" fill="none" stroke="#000" strokeWidth="1.500" /></svg>}
  </div>
);
const BOX = "size-[12px] border-[#cdcdcd] bg-white";
const OFF = "italic font-bold text-[#7c7c7c] ";
const ON = "font-bold text-black tracking-[-0.09px]";
type Layer = { pad: string; arrow?: "r" | "d"; on?: boolean; icon?: string; sw?: string; t: string; s: string; cur?: boolean };
const LAYERS: Layer[] = [
  { pad: "pl-[5px]", arrow: "r", icon: "group", t: "EMSR394 - Wildfire Scenario", s: "text-[#444] tracking-[-0.09px]" },
  { pad: "pl-[5px]", arrow: "d", on: true, icon: "group", t: "EMSR468 - Flood Scenario", s: "text-[#444] tracking-[-0.09px]" },
  { pad: "pl-[18px]", on: true, sw: "bg-[#b9cb4b] border-[#8b9838]", t: "building_yes", s: "font-bold text-black tracking-[-0.22px]" },
  { pad: "pl-[18px]", on: true, sw: "bg-[#2b79bf] border-[#1c5f9c]", t: "flood_scenario_50m", s: "font-bold text-[#d9ecff] underline tracking-[-0.21px]", cur: true },
  { pad: "pl-[18px]", sw: "bg-[#377eb8] border-[#2b6391]", t: "flood_scenario", s: OFF + "tracking-[0.02px]" },
  { pad: "pl-[18px]", on: true, sw: "bg-[#00e5ff] border-[#35b6c8]", t: "EMSR468_AOI05_DEL_PRODUCT_hydrographyA_r1_v1", s: ON },
  { pad: "pl-[18px]", sw: "bg-[#e3b13a] border-[#b08828]", t: "EMSR468_AOI05_DEL_PRODUCT_areaOfInterestA_r1_v1", s: OFF + "tracking-[0.14px]" },
  { pad: "pl-[18px]", arrow: "r", icon: "raster", t: "GHS_POP_E2015_GLOBE_R2019A_4326_CLIP", s: OFF + "tracking-[0.27px]" },
  { pad: "pl-[18px]", arrow: "r", icon: "raster", t: "GHS_POP_E2015_GLOBE_R2019A_4326_9ss_V1_0_18_3", s: OFF + "tracking-[0.25px]" },
  { pad: "pl-[18px]", icon: "raster", t: "2020-10-03-00_00_2020-10-03-23_59_Sentinel-2_L1C_True_color", s: OFF + "tracking-[0.31px]" },
  { pad: "pl-[18px]", icon: "raster", t: "2020-09-28-00_00_2020-09-28-23_59_Sentinel-2_L1C_True_color", s: OFF + "tracking-[0.31px]" },
  { pad: "pl-[5px]", arrow: "d", on: true, icon: "raster", t: "Google Satellite", s: "font-bold text-black tracking-[-0.2px]" },
];

function Docks() {
  return (
    <div className="flex w-[356px] shrink-0 flex-col bg-[#efefef] pr-[4px]">
      <div className="h-[11px] pl-[3px] text-[8px] leading-[11px]">Browser</div>
      <div className="flex h-[16px] items-center gap-[5px] pl-[5px]">
        {["addLayer", "refresh", "funnel", "up", "info"].map((n) => <Ic key={n} n={n} c="mr-[0.5px] size-[8px]" />)}
      </div>
      <div className="flex h-[167px] border border-[#bdbdbd] bg-white">
        <div className="-mt-[0.5px] flex-1 overflow-hidden">
          {BROWSER.map(([icon, t, arrow]) => (
            <div key={t} className="flex h-[11.8px] items-center pl-[6px]">
              <div className="w-[10px]">{arrow && <Right />}</div>
              <Ic n={icon} c="size-[10.500px]" />
              <span className="ml-[3px] whitespace-pre leading-none">{t}</span>
            </div>
          ))}
        </div>
        <div className="flex w-[9px] items-end justify-center bg-[#eaeaea] pb-[4px]"><Caret /></div>
      </div>
      <div className="flex h-[16px] items-end justify-between pl-[3px] text-[8px] leading-[15px]">
        <span>Layers</span>
        <div className="mb-[4px] flex gap-[1.500px]">
          {[0, 1].map((i) => <svg key={i} viewBox="0 0 7 7" className="size-[6.500px]"><rect x=".5" y=".5" width="6" height="6" rx="1" fill="#ddd" stroke="#888" /><path d="M2 2l3 3M5 2L2 5" stroke="#555" /></svg>)}
        </div>
      </div>
      <div className="flex h-[14px] items-center pl-[5px]">
        <Ic n="brush" c="size-[9px]" /><Ic n="groupPlus" c="ml-[5px] size-[9px]" /><Ic n="eye" c="ml-[5px] size-[9px]" /><Ic n="funnelY" c="ml-[4px] size-[9px]" />
        <Ic n="eps" c="ml-[5px] size-[9px]" /><Caret c="ml-[3px] h-[3px] w-[5px]" /><Ic n="down" c="ml-[5px] size-[9px]" /><Ic n="up" c="ml-[5px] size-[9px]" /><Ic n="remove" c="ml-[4px] size-[8px]" />
      </div>
      <div className="h-[247px] border border-[#bdbdbd] bg-white pt-[0.3px]">
        {LAYERS.map((l) => (
          <div key={l.t} className={"flex h-[11.83px] items-center " + l.pad + (l.cur ? " bg-[#0078d7]" : "")}>
            <div className="flex w-[11px] shrink-0 items-center">{l.arrow === "r" ? <Right /> : l.arrow === "d" ? <Caret /> : null}</div>
            <Check on={l.on} />
            {l.sw ? <div className={"ml-[2.500px] size-[11px] shrink-0 border " + l.sw} /> : <Ic n={l.icon!} c="ml-[3px] size-[10px]" />}
            <span className={"ml-[2.500px] whitespace-nowrap leading-none " + l.s}>{l.t}</span>
          </div>
        ))}
      </div>
    </div>
  );
}

/* ---------- menus ---------- */
const VECTOR: [string, number][] = [["QuickOSM", -1], ["Geoprocessing Tools", 0], ["Geometry Tools", 1], ["Analysis Tools", 0], ["Research Tools", 0], ["Data Management Tools", 0]];
const RESEARCH: [string, string][] = [
  ["grid", "Create Grid..."], ["extent", "Extract Layer Extent..."], ["dots", "Random Points in Extent..."], ["poly", "Random Points in Polygons..."], ["lines", "Random Points on Lines..."],
  ["sel", "Select by Location..."], ["dots", "Random Points in Layer Bounds..."], ["inside", "Random Points Inside Polygons..."], ["sel", "Random Selection..."], ["sel", "Random Selection Within Subsets..."], ["regular", "Regular Points..."],
];
function VectorMenu() {
  return (
    <div className="absolute left-[181px] top-[28px] h-[91px] w-[159px] border border-t-0 border-[#b5b5b5] bg-[#fafafa] shadow-[1px_1px_1px_#8888]">
      {VECTOR.map(([t, i]) => (
        <div key={t} className={"flex h-[15px] items-center pl-[4px] pr-[4px] " + (t === "Research Tools" ? "bg-[#0078d7] text-[#cfe7fb]" : "")}>
          <div className="w-[13px]">{i < 0 && <Ic n="osm" c="size-[11px]" />}</div>
          <span className="flex-1 leading-none"><U t={t} i={i} /></span>
          <Right c={t === "Research Tools" ? "fill-white" : "fill-[#444]"} />
        </div>
      ))}
    </div>
  );
}
function ResearchMenu() {
  return (
    <div className="absolute left-[338px] top-[88px] h-[166px] w-[186px] border border-[#b5b5b5] bg-white shadow-[1px_1px_1px_#8888]">
      <div className="-mt-px">
        {RESEARCH.map(([icon, t]) => (
          <div key={t} className={"flex h-[15.05px] items-center pl-[3px] " + (icon === "sel" && t.startsWith("Select") ? "bg-[#0078d7] text-[#e0f0ff]" : "")}>
            <Ic n={icon} c="size-[9.500px]" />
            <span className="ml-[4px] leading-none tracking-[-0.17px]">{t}</span>
          </div>
        ))}
      </div>
    </div>
  );
}

/* ---------- dialog ---------- */
const BTN = "flex shrink-0 items-center justify-center rounded-[1px] border border-[#c4c4c4] bg-linear-to-b from-white to-[#f0f0f0] ";
const PRED: [string, string, boolean][] = [["intersect", "touch", true], ["contain", "overlap", false], ["disjoint", "are within", false], ["equal", "cross", false]];
function Combo({ t, c, icon }: { t: string; c: string; icon?: boolean }) {
  return (
    <div className={"flex items-center justify-between bg-linear-to-b from-white to-[#ececec] " + c}>
      <span className="flex items-center gap-[1px] whitespace-nowrap">{icon && <Ic n="layer" c="h-[11px] w-[13px]" />}{t}</span>
      <Caret c="h-[4px] w-[7px]" />
    </div>
  );
}
function Dialog() {
  return (
    <div className="absolute left-[456px] top-[265px] flex h-[452px] w-[578px] border-[3px] border-[#f60000] bg-[#20382a]">
      <SatMap box="459 268 572 446" c="absolute inset-0 size-full" />
      <div className="relative ml-[2px] mt-[2px] flex h-[441px] w-[567px] flex-col bg-[#f0f0f0] font-['DejaVu_Sans_Condensed'] text-[8.500px] tracking-[0.08px] text-[#1c1c1c]">
        <div className="flex h-[26px] shrink-0 items-center bg-white pl-[6px] pr-[10px]">
          <QLogo c="size-[13px]" />
          <span className="ml-[4px] flex-1 pt-px font-['Open_Sans'] text-[10.200px] tracking-[-0.16px] text-[#333]">Select by Location</span>
          <svg viewBox="0 0 9 9" className="size-[9px]"><path d="M.5.5l8 8M8.500.5l-8 8" stroke="#222" /></svg>
        </div>
        <div className="flex h-[347px] shrink-0 pl-[8px] pt-[9px]">
          <div className="flex w-[439px] flex-col">
            <div className="flex h-[20px] items-end">
              <div className="z-10 -mb-px flex h-[21px] w-[66px] items-center justify-center rounded-t-[2px] border border-b-0 border-[#c4c4c4] bg-[#fafafa]">Parameters</div>
              <div className="flex h-[18px] w-[33px] items-center justify-center border border-b-0 border-l-0 border-[#c4c4c4] bg-[#e8e8e8]">Log</div>
            </div>
            <div className="flex h-[319px] flex-col border border-[#c4c4c4] px-[3px]">
              <div className="flex h-[18px] items-center">Select features from</div>
              <div className="flex h-[22px] items-start">
                <div className="ml-[3px] flex h-[22px] w-[410px] border-[3px] border-[#f60000]"><Combo t="building_yes [EPSG:4326]" icon c="flex-1 pb-px pr-[8px]" /></div>
                <div className={BTN + "h-[16px] w-[18px]"}>...</div>
              </div>
              <div className="flex h-[16px] items-center">Where the features (geometric predicate)</div>
              {PRED.map(([a, b, on]) => (
                <div key={a} className="flex h-[19.500px] items-center">
                  <Check on={on} c={BOX} /><span className="ml-[4px] w-[42px]">{a}</span>
                  <Check c={BOX} /><span className="ml-[4px]">{b}</span>
                </div>
              ))}
              <div className="flex h-[15px] items-center">By comparing to the features from</div>
              <div className="flex h-[25px] items-center">
                <div className="ml-[3px] flex h-[25px] w-[356px] border-[3px] border-[#f60000]"><Combo t="flood_scenario_50m [EPSG:3857]" icon c="flex-1 pr-[6px]" /></div>
                <Ic n="loop" c="ml-[5px] size-[16px]" />
                <Ic n="wrench" c="ml-[9px] size-[18px]" />
                <div className={BTN + "mb-[3px] ml-[6px] h-[16px] w-[18px] gap-px pt-[3px]"}>..<Caret c="mt-[4px] h-[4px] w-[6px]" /></div>
              </div>
              <div className="flex h-[17px] items-center text-[#8a8a8a]"><Check c="size-[12px] border-[#cfcfcf] bg-[#f3f3f3]" /><span className="ml-[4px]">Selected features only</span></div>
              <div className="flex h-[18px] items-center">Modify current selection by</div>
              <Combo t="creating new selection" c="mt-px h-[17px] w-[431px] shrink-0 rounded-[1px] border border-[#c4c4c4] pl-[3px] pr-[6px]" />
            </div>
          </div>
          <div className="flex w-[10px] justify-center"><Right c="mt-px fill-[#444]" /></div>
          <div className="h-[339px] w-[102px] border border-[#d0d0d0] bg-white pl-[3px] pt-[3px]">
            <h2 className="text-[13.800px] font-bold leading-[16px] tracking-[-0.05px] text-[#4a4a4a]">Select by<br />location</h2>
            <p className="mt-[8px] whitespace-nowrap text-[8.500px] leading-[10.900px] tracking-[0.02px] text-[#757575]">This algorithm creates<br />a selection in a vector<br />layer. The criteria for<br />selecting features is<br />based on the spatial<br />relationship between<br />each feature and the<br />features in an additional<br />layer.</p>
          </div>
        </div>
        <div className="mt-[21px] flex h-[17px] gap-[4px] pl-[8px]">
          <div className="flex w-[492px] items-center justify-center border border-[#c4c4c4] bg-white">0%</div>
          <div className={BTN + "w-[55px] text-[#a0a0a0]"}>Cancel</div>
        </div>
        <div className="mt-[2px] flex h-[22px] items-center pl-[8px]">
          <div className={BTN + "h-[17px] w-[97px] tracking-[0.04px]"}>Run as Batch Process...</div>
          <div className="ml-[280px] flex h-[22px] w-[60px] border-[3px] border-[#f60000]"><div className="flex flex-1 items-center justify-center border-r border-[#7fb9ea] bg-linear-to-b from-white to-[#eef3f8] pr-[3px]">Run</div></div>
          <div className={BTN + "h-[17px] w-[54px]"}>Close</div>
          <div className={BTN + "ml-[5px] h-[17px] w-[55px]"}>Help</div>
        </div>
      </div>
    </div>
  );
}

const BADGES: [number, string][] = [
  [1, "left-[129px] top-[9px]"], [2, "left-[129px] top-[79px]"], [3, "left-[290px] top-[147px]"], [4, "left-[424px] top-[329px]"], [5, "left-[428px] top-[466px]"], [6, "left-[795px] top-[649px]"],
];

export default function App() {
  return (
    <div className="relative h-[720px] w-[1035px] overflow-hidden bg-white font-['Open_Sans','Noto_Sans',sans-serif] text-[8px] tracking-[-0.14px] text-[#2a2a2a]">
      <div className="flex h-[579px] w-[1032px] flex-col border-b border-[#555] bg-[#f0f0f0]">
        <div className="flex h-[14px] shrink-0 items-center bg-white pl-[2px] pr-[13px]">
          <QLogo c="size-[11px]" />
          <span className="ml-[2px] flex-1 text-[8.500px] tracking-[-0.05px]">*Chapter-4_Copernicus_EMS_Exercise_Flood_and_Fire_Events — QGIS</span>
          <svg viewBox="0 0 70 8" className="h-[8px] w-[70px]" fill="none" stroke="#333" strokeWidth=".9"><path d="M0 4.500h6M32.500 2.500h4.500v4.500h-4.500zM34 2.500V1h4.500v4.500H37M63 1l6 6M69 1l-6 6" /></svg>
        </div>
        <div className="flex h-[14px] shrink-0 items-center border-b border-[#dedede] pl-[6px]">
          {MENUS.map(([t, w, i]) => <span key={t} className={"shrink-0 " + w}><U t={t} i={i} /></span>)}
          <div className="z-10 flex h-[17px] w-[32px] shrink-0 items-center justify-center border-[3px] border-[#f60000] bg-[#0078d7] text-[#dcefff]"><U t="Vector" i={4} /></div>
          <div className="w-[3px] shrink-0" />
          {MENUS2.map(([t, w, i]) => <span key={t} className={"shrink-0 " + w}><U t={t} i={i} /></span>)}
        </div>
        <Toolbars />
        <div className="flex h-[470px] shrink-0">
          <Docks />
          <SatMap box="356 91 676 470" c="h-[470px] w-[676px]" />
        </div>
        <div className="flex flex-1 items-center pl-[3px]">
          <div className="flex h-[13px] w-[125px] items-center gap-[4px] border border-[#c4c4c4] bg-white pl-[4px] font-['DejaVu_Sans_Condensed'] text-[7.500px] tracking-[-0.05px] text-[#8a8a8a]"><Ic n="search" c="size-[7px]" />Type to locate (Ctrl+K)</div>
        </div>
      </div>
      <VectorMenu />
      <ResearchMenu />
      <div className="absolute left-[181px] top-[86px] h-[19px] w-[163px] border-[3px] border-[#f60000]" />
      <div className="absolute left-[338px] top-[162px] h-[17px] w-[188px] border-[3px] border-[#f60000]" />
      <Dialog />
      {BADGES.map(([n, pos]) => <div key={n} className={"absolute flex size-[44px] items-center justify-center rounded-full bg-[#fb0007] text-[19px] font-bold tracking-normal text-white " + pos}>{n}</div>)}
    </div>
  );
}
